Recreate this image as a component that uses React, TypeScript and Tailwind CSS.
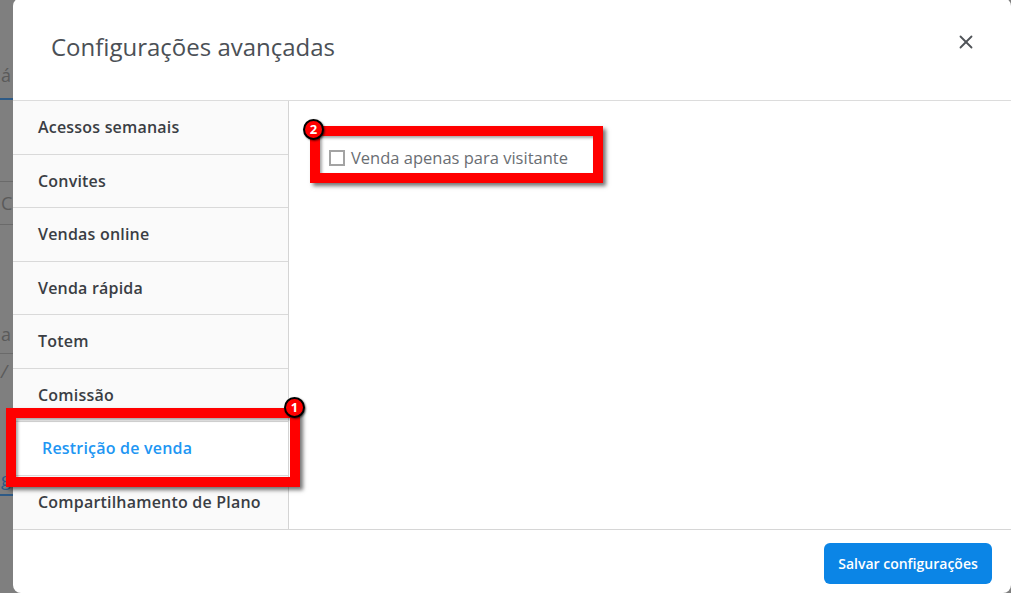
import { X } from "lucide-react";

const items = [
  "Acessos semanais",
  "Convites",
  "Vendas online",
  "Venda rápida",
  "Totem",
  "Comissão",
  "Restrição de venda",
  "Compartilhamento de Plano",
];

function Badge({ n, className }: { n: number; className: string }) {
  return (
    <div
      className={`absolute flex h-[21px] w-[21px] items-center justify-center rounded-full border-2 border-black bg-[#ff0000] text-[13px] font-bold leading-none text-white shadow-[1px_1px_2px_rgba(0,0,0,0.6)] ${className}`}
    >
      {n}
    </div>
  );
}

export default function App() {
  return (
    <div
      className="flex h-[593px] w-[1011px] overflow-hidden bg-[#7f7f7f]"
      style={{ fontFamily: "'Open Sans', 'Noto Sans', sans-serif" }}
    >
      {/* page behind the overlay */}
      <div className="flex w-[13px] shrink-0 flex-col text-[18px] leading-none text-[#5a5a5a]">
        <div className="h-[66px]" />
        <div className="pl-[1px]">á</div>
        <div className="mt-[14px] h-[2px] bg-[#2d5a86]" />
        <div className="mt-[81px] h-px bg-[#6a6a6a]" />
        <div className="mt-[12px] pl-[1px]">C</div>
        <div className="mt-[12px] h-px bg-[#6a6a6a]" />
        <div className="mt-[100px] pl-[1px]">a</div>
        <div className="mt-[10px] h-px bg-[#6a6a6a]" />
        <div className="mt-[8px] pl-[1px] italic">/</div>
        <div className="mt-[90px] pl-[1px] text-[#2d5a86]">g</div>
        <div className="mt-[6px] h-[2px] bg-[#2d5a86]" />
      </div>

      <div className="relative mt-[-2px] flex h-[595px] flex-1 flex-col rounded-lg bg-white">
        <div className="flex h-[103px] shrink-0 items-center justify-between border-b border-[#dcdcdc] pl-[38px] pr-[34px]">
          <h1 className="mt-[-4px] text-[24px] font-normal text-[#4b5056]">Configurações avançadas</h1>
          <X className="mt-[-14px] h-[22px] w-[22px] text-[#505458]" strokeWidth={2} />
        </div>

        <div className="flex h-[428px] shrink-0">
          <div className="flex w-[276px] flex-col border-r border-[#d4d4d4] bg-[#fafafa]">
            {items.map((label, i) => {
              const active = label === "Restrição de venda";
              return (
                <div
                  key={label}
                  className={`flex h-[53.5px] items-center border-b border-[#d9d9d9] text-[16px] font-semibold tracking-[0.2px] ${
                    active ? "bg-white pl-[29px] text-[#2196f3]" : "pl-[25px] text-[#3a3e44]"
                  } ${i === items.length - 1 ? "border-b-0" : ""}`}
                >
                  {label}
                </div>
              );
            })}
          </div>
          <div className="flex-1 pl-[40px] pt-[45px]">
            <label className="flex items-center gap-[6px] text-[16.5px] text-[#6a6e73]">
              <span className="h-[16px] w-[16px] border-2 border-[#a3a3a3] bg-white" />
              Venda apenas para visitante
            </label>
          </div>
        </div>

        <div className="flex flex-1 items-center justify-end border-t border-[#d6d6d6] pr-[19px]">
          <button className="mt-[4px] h-[41px] w-[168px] rounded-md bg-[#0b85e6] text-[14px] font-semibold text-white">
            Salvar configurações
          </button>
        </div>

        {/* annotations */}
        <div className="absolute left-[-7px] top-[410px] h-[79px] w-[294px] border-[10px] border-[#ff0000] shadow-[3px_3px_4px_rgba(0,0,0,0.55),inset_2px_2px_3px_rgba(0,0,0,0.35)]" />
        <Badge n={1} className="left-[271px] top-[399px]" />
        <div className="absolute left-[297px] top-[128px] h-[57px] w-[293px] border-[10px] border-[#ff0000] shadow-[3px_3px_4px_rgba(0,0,0,0.55),inset_2px_2px_3px_rgba(0,0,0,0.35)]" />
        <Badge n={2} className="left-[290px] top-[121px]" />
      </div>
    </div>
  );
}
